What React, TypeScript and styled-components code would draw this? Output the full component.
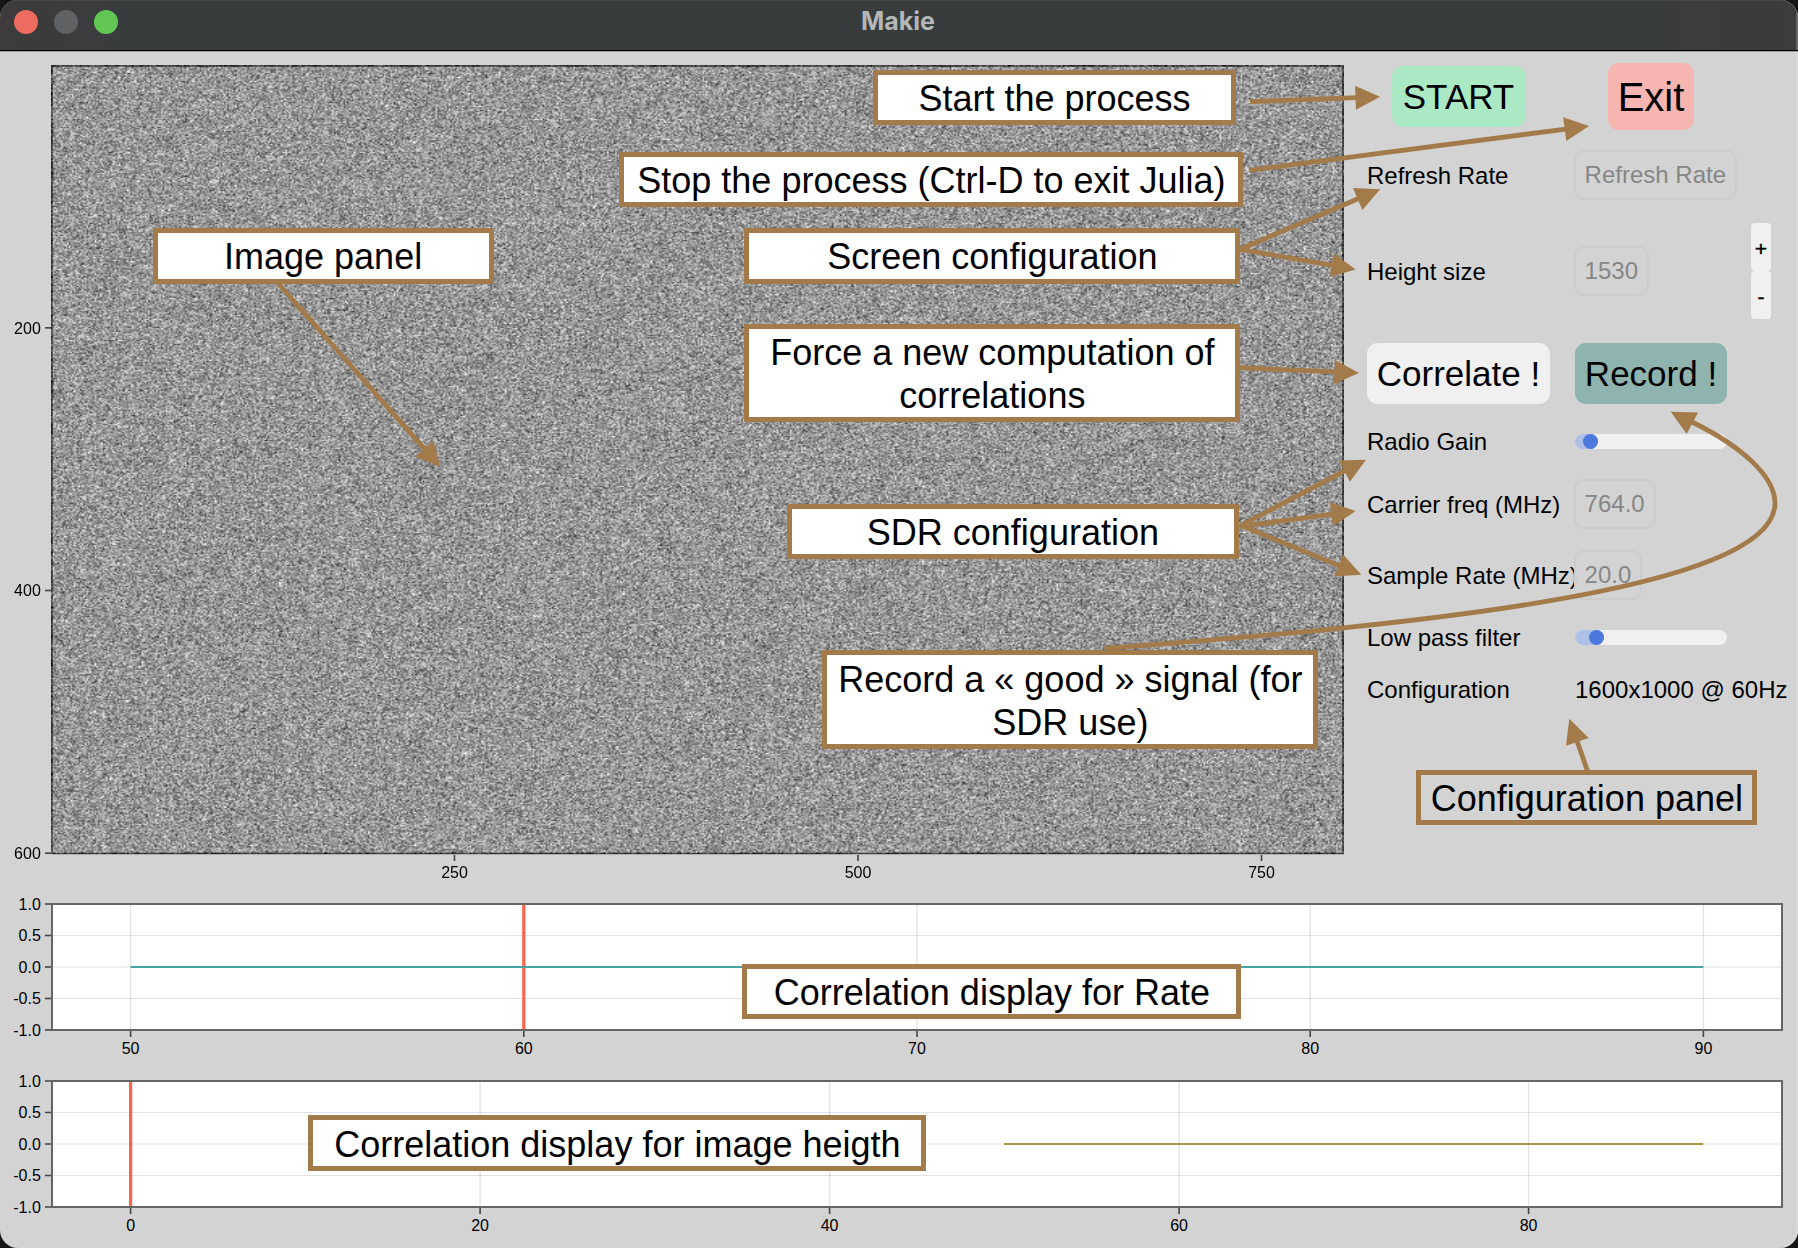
import React, { useLayoutEffect, useRef } from 'react';
import styled, { createGlobalStyle } from 'styled-components';

const FONT = '"Liberation Sans", Arial, Helvetica, sans-serif';
const BROWN = '#a37b4a';

const GlobalStyle = createGlobalStyle`
  html, body { margin: 0; padding: 0; background: #161616; }
  body { font-family: ${FONT}; color: #000; overflow: hidden; }
  * { box-sizing: border-box; }
`;

const Window = styled.div`
  position: relative;
  display: flex;
  flex-direction: column;
  width: 1798px;
  height: 1248px;
  background: #d3d3d3;
  border-radius: 18px;
  overflow: hidden;
  box-shadow: inset -2px 0 0 #dadada;
`;

const TitleBar = styled.header`
  display: grid;
  grid-template-columns: 1fr auto 1fr;
  flex: none;
  height: 52px;
  padding: 10px 16px 0 14px;
  background: linear-gradient(90deg, #3d3b3c 0, #393c3d 120px, #393c3d 1660px, #3d3b3c 100%);
  border-bottom: 1px solid #9c9c9c;
  box-shadow: inset 0 -1px 0 #000, inset -2px 0 0 #636765, inset 0 1px 0 #444748;
`;

const Lights = styled.div`
  display: flex;
  gap: 16px;
`;

const Light = styled.span<{ $color: string }>`
  width: 24px;
  height: 24px;
  border-radius: 50%;
  background: ${(p) => p.$color};
`;

const Title = styled.h1`
  margin: 0;
  font-family: Inter, ${FONT};
  font-size: 25px;
  font-weight: 700;
  line-height: 22px;
  color: #b3b7b7;
`;

const Upper = styled.main`
  display: flex;
  flex: none;
  height: 838px;
`;

const ImageAxis = styled.section`
  position: relative;
  width: 1344px;
  padding: 13px 0 0 51px;
`;

const NoiseCanvas = styled.canvas`
  display: block;
  width: 1293px;
  height: 789px;
`;

const AxisOverlay = styled.svg`
  position: absolute;
  left: 0;
  top: 0;
`;

const Panel = styled.aside`
  display: flex;
  flex-direction: column;
  padding: 11px 0 0 23px;
`;

const Row = styled.div<{ $h: number }>`
  display: grid;
  grid-template-columns: 183px 152px 20px;
  column-gap: 25px;
  align-items: center;
  height: ${(p) => p.$h}px;
  white-space: nowrap;
`;

const Button = styled.button<{ $bg: string; $size?: number; $h?: number; $w: number }>`
  justify-self: center;
  width: ${(p) => p.$w}px;
  height: ${(p) => p.$h ?? 61}px;
  padding: ${(p) => (p.$size ? '2px 0 0' : '0')};
  border: 0;
  border-radius: 11px;
  background: ${(p) => p.$bg};
  color: #000;
  font: ${(p) => p.$size ?? 35}px ${FONT};
`;

const Label = styled.span`
  width: 0;
  padding-top: 1px;
  font-size: 24px;
  line-height: 28px;
`;

const TextBox = styled.div`
  justify-self: start;
  margin-left: -1px;
  height: 50px;
  padding: 0 9px 0 8.6px;
  border: 2px solid #cccccc;
  border-radius: 10px;
  background: rgba(211, 211, 211, 0.88);
  color: #868686;
  font-size: 24px;
  line-height: 46px;
  z-index: 1;
`;

const Track = styled.div`
  display: flex;
  width: 152px;
  height: 15px;
  border-radius: 8px;
  background: #f0f0f0;
`;

const Fill = styled.div<{ $w: number }>`
  display: flex;
  justify-content: flex-end;
  width: ${(p) => p.$w}px;
  border-radius: 8px;
  background: #aebfe8;
`;

const Thumb = styled.div`
  width: 15px;
  height: 15px;
  border-radius: 50%;
  background: #4d79dc;
`;

const Stepper = styled.div`
  display: flex;
  flex-direction: column;
  margin-left: -1px;
`;

const StepButton = styled.button`
  width: 20px;
  height: 48px;
  padding: 3px 0 0;
  border: 0;
  border-radius: 4px;
  background: #f0f0f0;
  color: #000;
  font: 21px/40px ${FONT};
  -webkit-text-stroke: 0.4px #000;
`;

const Charts = styled.section`
  display: flex;
  flex-direction: column;
`;

const ChartSvg = styled.svg`
  display: block;
  font-family: ${FONT};
`;

const TickText = styled.text`
  font: 16px ${FONT};
  fill: #000;
`;

const Callout = styled.div<{ $x: number; $y: number; $w: number; $h: number; $clear?: boolean }>`
  position: absolute;
  left: ${(p) => p.$x}px;
  top: ${(p) => p.$y}px;
  width: ${(p) => p.$w}px;
  height: ${(p) => p.$h}px;
  display: flex;
  align-items: center;
  justify-content: center;
  padding-top: 2px;
  border: 5px solid ${BROWN};
  background: ${(p) => (p.$clear ? 'transparent' : '#fff')};
  font-size: 36px;
  line-height: 43px;
  text-align: center;
  white-space: pre;
`;

const Arrows = styled.svg`
  position: absolute;
  left: 0;
  top: 0;
  z-index: 2;
  pointer-events: none;
`;

function Noise() {
  const ref = useRef<HTMLCanvasElement>(null);
  useLayoutEffect(() => {
    const ctx = ref.current?.getContext('2d');
    if (!ctx) return;
    const w = 800;
    const h = 600;
    const image = ctx.createImageData(w, h);
    let seed = 20231;
    const rand = () => {
      seed ^= seed << 13;
      seed ^= seed >>> 17;
      seed ^= seed << 5;
      return (seed >>> 0) / 4294967296;
    };
    for (let i = 0; i < w * h; i++) {
      const n = rand() + rand() + rand() + rand() - 2;
      const x = i % w;
      const y = (i / w) | 0;
      const edge = x === 0 || y === 0 || x === w - 1 || y === h - 1;
      const v = (edge ? 115 : 151) + n * (edge ? 85 : 62);
      image.data[i * 4] = v;
      image.data[i * 4 + 1] = v;
      image.data[i * 4 + 2] = v;
      image.data[i * 4 + 3] = 255;
    }
    ctx.putImageData(image, 0, 0);
  }, []);
  return <NoiseCanvas ref={ref} width={800} height={600} />;
}

const Y_TICKS = ['1.0', '0.5', '0.0', '-0.5', '-1.0'];

type ChartProps = {
  height: number;
  ticks: { x: number; label: string }[];
  marker: number;
  from: number;
  to: number;
  color: string;
};

function Chart({ height, ticks, marker, from, to, color }: ChartProps) {
  const top = 14;
  const bottom = top + 126;
  const mid = top + 63;
  return (
    <ChartSvg width={1798} height={height}>
      <rect x={52} y={top} width={1730} height={126} fill="#fff" />
      {ticks.map((t) => (
        <line key={t.label} x1={t.x} x2={t.x} y1={top} y2={bottom} stroke="#000" strokeOpacity={0.11} strokeWidth={1.4} />
      ))}
      {[1, 2, 3].map((i) => (
        <line key={i} x1={52} x2={1782} y1={top + i * 31.5} y2={top + i * 31.5} stroke="#000" strokeOpacity={0.11} strokeWidth={1.1} />
      ))}
      <line x1={marker} x2={marker} y1={top} y2={bottom} stroke="#ff6347" strokeWidth={3.2} />
      <line x1={from} x2={to} y1={mid} y2={mid} stroke={color} strokeWidth={2} />
      <rect x={52} y={top} width={1730} height={126} fill="none" stroke="#666" strokeWidth={2} />
      {Y_TICKS.map((t, i) => (
        <g key={t}>
          <line x1={45} x2={51} y1={top + i * 31.5} y2={top + i * 31.5} stroke="#444" strokeWidth={1.6} />
          <TickText x={40.8} y={top + i * 31.5 + 5.7} textAnchor="end">{t}</TickText>
        </g>
      ))}
      {ticks.map((t) => (
        <g key={t.label}>
          <line x1={t.x} x2={t.x} y1={bottom + 1} y2={bottom + 7} stroke="#444" strokeWidth={1.6} />
          <TickText x={t.x} y={bottom + 24.3} textAnchor="middle">{t.label}</TickText>
        </g>
      ))}
    </ChartSvg>
  );
}

function Arrow({ a, b }: { a: [number, number]; b: [number, number] }) {
  const dx = b[0] - a[0];
  const dy = b[1] - a[1];
  const len = Math.hypot(dx, dy);
  const ux = dx / len;
  const uy = dy / len;
  const bx = b[0] - ux * 24.5;
  const by = b[1] - uy * 24.5;
  const head = `${b[0]},${b[1]} ${bx - uy * 12},${by + ux * 12} ${bx + uy * 12},${by - ux * 12}`;
  return (
    <g>
      <line x1={a[0]} y1={a[1]} x2={bx + ux} y2={by + uy} stroke={BROWN} strokeWidth={4.8} />
      <polygon points={head} fill={BROWN} />
    </g>
  );
}

const ARROWS: [[number, number], [number, number]][] = [
  [[276.5, 281.5], [440.5, 467]],
  [[1250, 101.7], [1380, 96.7]],
  [[1249.3, 170.3], [1589, 126]],
  [[1240, 249.3], [1380.2, 189.3]],
  [[1240, 249.3], [1355.7, 269.5]],
  [[1240, 367.7], [1359, 373]],
  [[1240, 526], [1366, 459.7]],
  [[1240, 526.5], [1355.7, 511]],
  [[1240, 525], [1361.3, 574.8]],
  [[1587.5, 771], [1569.3, 718.7]],
];

export default function App() {
  return (
    <>
      <GlobalStyle />
      <Window>
        <TitleBar>
          <Lights>
            <Light $color="#ed6b5f" />
            <Light $color="#606163" />
            <Light $color="#62c655" />
          </Lights>
          <Title>Makie</Title>
        </TitleBar>
        <Upper>
          <ImageAxis>
            <Noise />
            <AxisOverlay width={1344} height={838}>
              <rect x={52} y={14} width={1291} height={787.5} fill="none" stroke="#000" strokeOpacity={0.5} strokeWidth={1.7} />
              {[200, 400, 600].map((v) => (
                <g key={v}>
                  <line x1={45} x2={51} y1={13.2 + v * 1.3133} y2={13.2 + v * 1.3133} stroke="#444" strokeWidth={1.6} />
                  <TickText x={40.8} y={19 + v * 1.3133} textAnchor="end">{v}</TickText>
                </g>
              ))}
              {[250, 500, 750].map((v) => (
                <g key={v}>
                  <line x1={51 + v * 1.614} x2={51 + v * 1.614} y1={803} y2={809} stroke="#444" strokeWidth={1.6} />
                  <TickText x={51 + v * 1.614} y={826.3} textAnchor="middle">{v}</TickText>
                </g>
              ))}
            </AxisOverlay>
          </ImageAxis>
          <Panel>
            <Row $h={67}>
              <Button $bg="#aae9c4" $w={134}>START</Button>
              <Button $bg="#f6b5b0" $w={86} $h={67} $size={40}>Exit</Button>
            </Row>
            <Row $h={90}>
              <Label>Refresh Rate</Label>
              <TextBox>Refresh Rate</TextBox>
            </Row>
            <Row $h={102}>
              <Label>Height size</Label>
              <TextBox>1530</TextBox>
              <Stepper>
                <StepButton>+</StepButton>
                <StepButton>-</StepButton>
              </Stepper>
            </Row>
            <Row $h={103}>
              <Button $bg="#f0f0f0" $w={183}>Correlate !</Button>
              <Button $bg="#8fb4b0" $w={152}>Record !</Button>
            </Row>
            <Row $h={33}>
              <Label>Radio Gain</Label>
              <Track><Fill $w={23}><Thumb /></Fill></Track>
            </Row>
            <Row $h={92}>
              <Label>Carrier freq (MHz)</Label>
              <TextBox>764.0</TextBox>
            </Row>
            <Row $h={50}>
              <Label>Sample Rate (MHz)</Label>
              <TextBox>20.0</TextBox>
            </Row>
            <Row $h={75}>
              <Label>Low pass filter</Label>
              <Track><Fill $w={28.5}><Thumb /></Fill></Track>
            </Row>
            <Row $h={29}>
              <Label>Configuration</Label>
              <Label>1600x1000 @ 60Hz</Label>
            </Row>
          </Panel>
        </Upper>
        <Charts>
          <Chart
            height={177}
            ticks={[50, 60, 70, 80, 90].map((v, i) => ({ x: 130.6 + i * 393.2, label: String(v) }))}
            marker={523.8}
            from={130.6}
            to={1703.2}
            color="#45a3a4"
          />
          <Chart
            height={181}
            ticks={[0, 20, 40, 60, 80].map((v, i) => ({ x: 130.6 + i * 349.5, label: String(v) }))}
            marker={130.6}
            from={1004}
            to={1703.2}
            color="#a79a45"
          />
        </Charts>

        <Callout $x={152.6} $y={228} $w={341} $h={55.5}>Image panel</Callout>
        <Callout $x={872.6} $y={69.6} $w={363.8} $h={55.8}>Start the process</Callout>
        <Callout $x={619.4} $y={151.6} $w={624} $h={55.8}>Stop the process (Ctrl-D to exit Julia)</Callout>
        <Callout $x={744.4} $y={228} $w={496} $h={55.5}>Screen configuration</Callout>
        <Callout $x={744.4} $y={323.6} $w={496} $h={98.8}>{'Force a new computation of\ncorrelations'}</Callout>
        <Callout $x={786.6} $y={503.6} $w={452.6} $h={55.5}>SDR configuration</Callout>
        <Callout $x={822.4} $y={650} $w={496} $h={99.4}>{'Record a « good » signal (for\nSDR use)'}</Callout>
        <Callout $x={1416.4} $y={769.5} $w={341} $h={55.8} $clear>Configuration panel</Callout>
        <Callout $x={742.4} $y={963.5} $w={499} $h={55.8}>Correlation display for Rate</Callout>
        <Callout $x={308.4} $y={1115.4} $w={618} $h={55.8}>Correlation display for image heigth</Callout>

        <Arrows width={1798} height={1248}>
          {ARROWS.map(([a, b], i) => (
            <Arrow key={i} a={a} b={b} />
          ))}
          <path
            d="M1104.5 648.5C1400 626 1775 592 1775 503C1775 478 1745 448 1692 422"
            fill="none"
            stroke={BROWN}
            strokeWidth={4.8}
          />
          <polygon points="1670.7,411.7 1698,412.5 1686.7,434" fill={BROWN} />
        </Arrows>
      </Window>
    </>
  );
}
